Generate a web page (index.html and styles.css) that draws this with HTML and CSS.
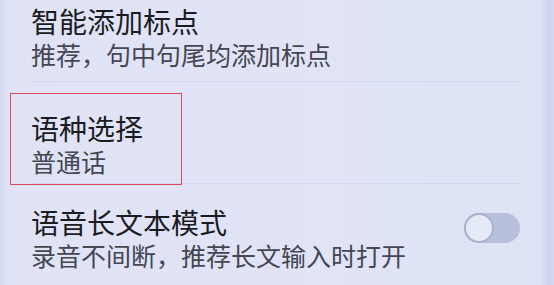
FILE: index.html
```html
<!DOCTYPE html>
<html lang="zh-CN">
<head>
    <meta charset="UTF-8">
    <meta name="viewport" content="width=device-width, initial-scale=1.0">
    <link rel="stylesheet" href="styles.css">
</head>
<body>
    <div class="settings">
        <div class="item first">
            <div class="item-text">
                <div class="item-title">智能添加标点</div>
                <div class="item-sub">推荐，句中句尾均添加标点</div>
            </div>
        </div>
        <div class="item second">
            <div class="mark-box"></div>
            <div class="item-text">
                <div class="item-title">语种选择</div>
                <div class="item-sub">普通话</div>
            </div>
        </div>
        <div class="item third">
            <div class="item-text">
                <div class="item-title">语音长文本模式</div>
                <div class="item-sub">录音不间断，推荐长文输入时打开</div>
            </div>
            <div class="toggle"><div class="knob"></div></div>
        </div>
    </div>
</body>
</html>
```

FILE: styles.css
```css
body {
    margin: 0px;
    height: 285px;
    overflow: hidden;
    font-family: "Noto Sans CJK SC", "Noto Sans", sans-serif;
    background: linear-gradient(90deg, #d6dbef 0px, #dfe3f5 8px, #e0e4f6 60%, #dde2f5 540px, #ccd3ec 548px, #d3d9f0 554px);
}
.settings {
    display: flex;
    flex-direction: column;
}
.item {
    position: relative;
    display: flex;
    align-items: flex-start;
    margin-left: 31px;
    margin-right: 34px;
}
.item.first {
    padding-top: 5px;
    padding-bottom: 11px;
    border-bottom: 1px solid #d3d8ec;
}
.item.second {
    padding-top: 30px;
    padding-bottom: 6px;
    border-bottom: 1px solid #d3d8ec;
}
.item.third {
    padding-top: 22px;
}
.item-text {
    flex: 1;
}
.item-title {
    font-size: 28px;
    line-height: 32px;
    color: #1b1c22;
}
.item-sub {
    font-size: 25px;
    line-height: 32px;
    margin-top: 1px;
    color: #444752;
}
/* red annotation rectangle drawn over the row */
.mark-box {
    position: absolute;
    left: -21px;
    top: 11px;
    width: 170px;
    height: 90px;
    border: 1px solid #d84a5e;
}
.toggle {
    width: 56px;
    height: 30px;
    margin-top: 7px;
    border-radius: 15px;
    background-color: #b8bfda;
    display: flex;
    align-items: center;
}
.knob {
    width: 26px;
    height: 26px;
    border-radius: 50%;
    background-color: #e6e9f7;
    border: 2px solid #a9b0c9;
}
```
